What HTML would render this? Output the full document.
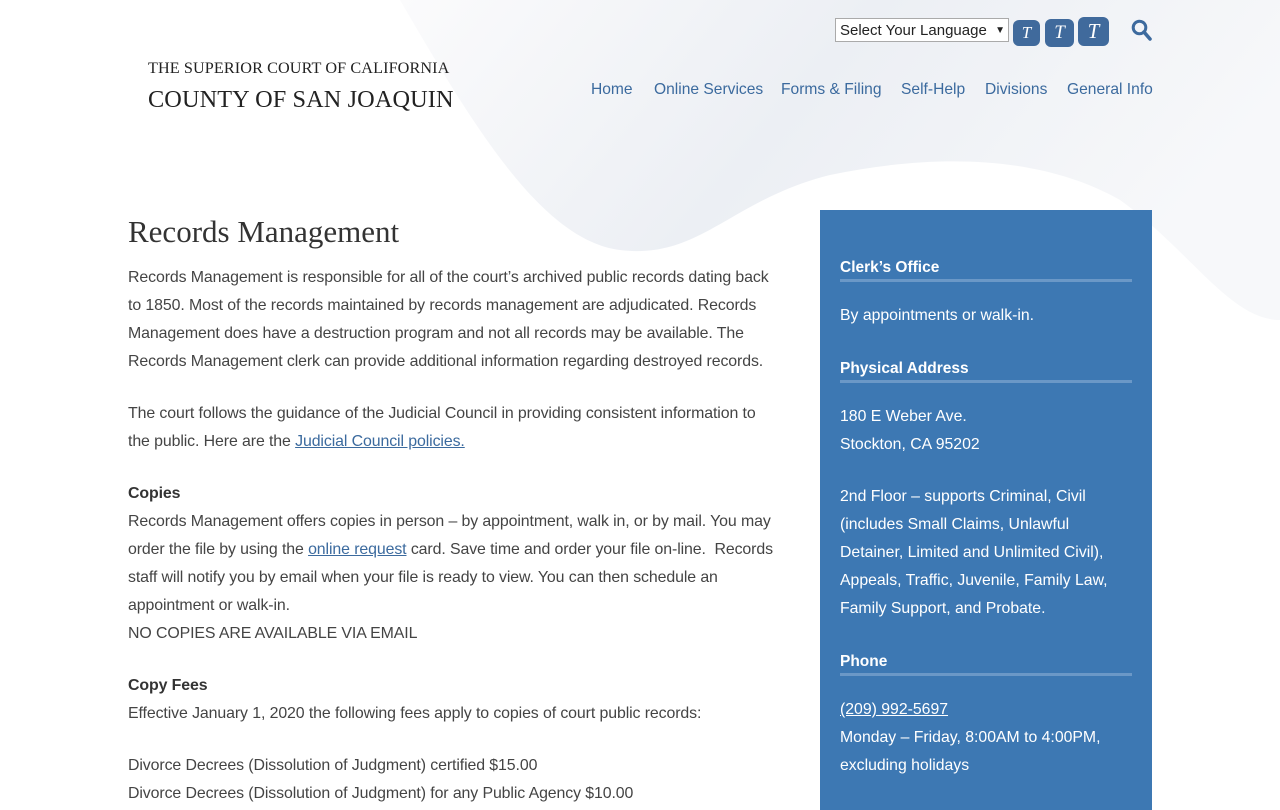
<!DOCTYPE html>
<html><head><meta charset="utf-8"><style>
body{margin:0;width:1280px;height:800px;overflow:hidden;background:#fff;font-family:"Liberation Sans",sans-serif;position:relative}
.bg{position:absolute;left:0;top:0}
.abs{position:absolute;white-space:nowrap}
.serif{font-family:"Liberation Serif",serif;color:#222}
.nav a{color:#3b6a9e;text-decoration:none;font-size:15.6px;position:absolute;top:81px}
.p{position:absolute;left:128px;font-size:15.9px;color:#444;line-height:28px;white-space:nowrap;letter-spacing:-0.1px}
.p a{color:#3b6a9e;text-decoration:underline}
.side{position:absolute;left:820px;top:210px;width:332px;height:600px;background:#3d78b3;color:#fff}
.side .h{position:absolute;left:20px;width:292px;font-weight:bold;font-size:15.5px;border-bottom:3px solid #6b98c7;padding-bottom:1px;line-height:20px}
.side .t{position:absolute;left:20px;font-size:15.8px;line-height:28px;white-space:nowrap}
.tb{position:absolute;top:19px;background:#406a9c;border-radius:6px;color:#fff;font-family:"Liberation Serif",serif;font-style:italic;text-align:center}
</style></head><body>
<svg class="bg" width="1280" height="800">
<defs>
<linearGradient id="g" x1="0" y1="0" x2="1" y2="0.3"><stop offset="0" stop-color="#fbfbfc"/><stop offset="0.5" stop-color="#eceff4"/><stop offset="1" stop-color="#f7f8fa"/></linearGradient>
</defs>
<path d="M400 0 H1280 V320 C1230 320 1190 250 1120 200 C1050 160 950 150 830 175 C730 200 700 260 620 250 C540 240 470 120 400 0 Z" fill="url(#g)"/>
</svg>
<div class="abs serif" style="left:148px;top:59px;font-size:16.2px;letter-spacing:0.1px">THE SUPERIOR COURT OF CALIFORNIA</div>
<div class="abs serif" style="left:148px;top:86px;font-size:24.3px;letter-spacing:0.1px">COUNTY OF SAN JOAQUIN</div>
<div class="abs" style="left:835px;top:18px;width:168px;height:22px;border:1px solid #aaa;background:#fff;font-size:15px;line-height:24px;padding-left:4px;box-sizing:content-box;color:#222">Select Your Language<span style="position:absolute;right:3px;font-size:10px">&#9660;</span></div>
<div class="tb" style="left:1013px;width:27px;height:26px;font-size:17px;line-height:26px;top:20px">T</div>
<div class="tb" style="left:1045px;width:29px;height:28px;font-size:19px;line-height:28px">T</div>
<div class="tb" style="left:1078px;width:31px;height:29px;font-size:21px;line-height:29px;top:17px">T</div>
<svg class="abs" style="left:1131px;top:19px" width="22" height="24"><circle cx="8.5" cy="8.5" r="6.3" fill="none" stroke="#3d6a9e" stroke-width="3"/><path d="M13 13 L19 20" stroke="#3d6a9e" stroke-width="3.6" stroke-linecap="round"/></svg>
<div class="nav">
<a style="left:591px">Home</a><a style="left:654px">Online Services</a><a style="left:781px">Forms &amp; Filing</a><a style="left:901px">Self-Help</a><a style="left:985px">Divisions</a><a style="left:1067px">General Info</a>
</div>
<div class="abs serif" style="left:128px;top:214px;font-size:31px;color:#333">Records Management</div>
<div class="p" style="top:264px">Records Management is responsible for all of the court’s archived public records dating back<br>to 1850. Most of the records maintained by records management are adjudicated. Records<br>Management does have a destruction program and not all records may be available. The<br>Records Management clerk can provide additional information regarding destroyed records.</div>
<div class="p" style="top:400px">The court follows the guidance of the Judicial Council in providing consistent information to<br>the public. Here are the <a>Judicial Council policies.</a></div>
<div class="p" style="top:480px"><b style="color:#333;font-weight:600">Copies</b><br>Records Management offers copies in person – by appointment, walk in, or by mail. You may<br>order the file by using the <a>online request</a> card. Save time and order your file on-line.&nbsp; Records<br>staff will notify you by email when your file is ready to view. You can then schedule an<br>appointment or walk-in.<br>NO COPIES ARE AVAILABLE VIA EMAIL</div>
<div class="p" style="top:672px"><b style="color:#333;font-weight:600">Copy Fees</b><br>Effective January 1, 2020 the following fees apply to copies of court public records:</div>
<div class="p" style="top:752px">Divorce Decrees (Dissolution of Judgment) certified $15.00<br>Divorce Decrees (Dissolution of Judgment) for any Public Agency $10.00</div>
<div class="side">
<div class="h" style="top:48px">Clerk’s Office</div>
<div class="t" style="top:92px">By appointments or walk-in.</div>
<div class="h" style="top:149px">Physical Address</div>
<div class="t" style="top:193px">180 E Weber Ave.<br>Stockton, CA 95202</div>
<div class="t" style="top:273px">2nd Floor – supports Criminal, Civil<br>(includes Small Claims, Unlawful<br>Detainer, Limited and Unlimited Civil),<br>Appeals, Traffic, Juvenile, Family Law,<br>Family Support, and Probate.</div>
<div class="h" style="top:442px">Phone</div>
<div class="t" style="top:486px"><u>(209) 992-5697</u><br>Monday – Friday, 8:00AM to 4:00PM,<br>excluding holidays</div>
</div>
</body></html>
